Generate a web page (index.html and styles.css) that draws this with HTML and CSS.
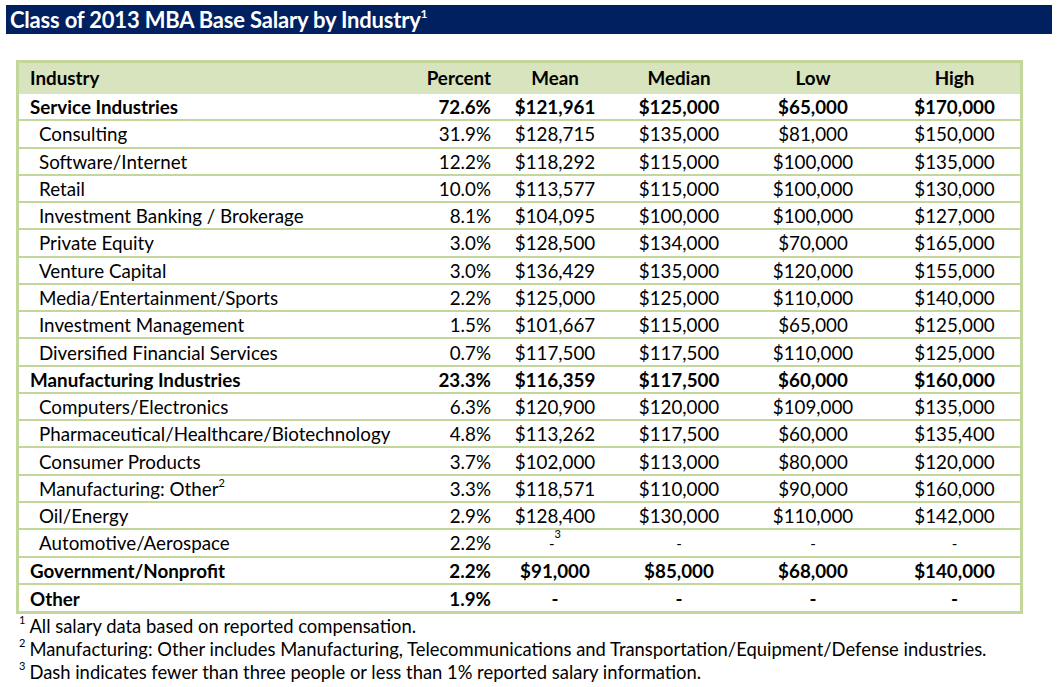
FILE: index.html
```html
<!DOCTYPE html>
<html>
<head>
<meta charset="utf-8">
<link rel="stylesheet" href="styles.css">
</head>
<body>
<div class="title">Class of 2013 MBA Base Salary by Industry<sup>1</sup></div>
<table class="salary">
  <colgroup>
    <col class="c-ind"><col class="c-pct"><col class="c-mean"><col class="c-med"><col class="c-low"><col class="c-high">
  </colgroup>
  <thead>
    <tr><th class="ind">Industry</th><th class="pct">Percent</th><th>Mean</th><th>Median</th><th>Low</th><th class="high">High</th></tr>
  </thead>
  <tbody>
    <tr class="grp"><td class="ind">Service Industries</td><td class="pct">72.6%</td><td>$121,961</td><td>$125,000</td><td>$65,000</td><td class="high">$170,000</td></tr>
    <tr><td class="ind sub">Consulting</td><td class="pct">31.9%</td><td>$128,715</td><td>$135,000</td><td>$81,000</td><td class="high">$150,000</td></tr>
    <tr><td class="ind sub">Software/Internet</td><td class="pct">12.2%</td><td>$118,292</td><td>$115,000</td><td>$100,000</td><td class="high">$135,000</td></tr>
    <tr><td class="ind sub">Retail</td><td class="pct">10.0%</td><td>$113,577</td><td>$115,000</td><td>$100,000</td><td class="high">$130,000</td></tr>
    <tr><td class="ind sub">Investment Banking / Brokerage</td><td class="pct">8.1%</td><td>$104,095</td><td>$100,000</td><td>$100,000</td><td class="high">$127,000</td></tr>
    <tr><td class="ind sub">Private Equity</td><td class="pct">3.0%</td><td>$128,500</td><td>$134,000</td><td>$70,000</td><td class="high">$165,000</td></tr>
    <tr><td class="ind sub">Venture Capital</td><td class="pct">3.0%</td><td>$136,429</td><td>$135,000</td><td>$120,000</td><td class="high">$155,000</td></tr>
    <tr><td class="ind sub">Media/Entertainment/Sports</td><td class="pct">2.2%</td><td>$125,000</td><td>$125,000</td><td>$110,000</td><td class="high">$140,000</td></tr>
    <tr><td class="ind sub">Investment Management</td><td class="pct">1.5%</td><td>$101,667</td><td>$115,000</td><td>$65,000</td><td class="high">$125,000</td></tr>
    <tr><td class="ind sub">Diversified Financial Services</td><td class="pct">0.7%</td><td>$117,500</td><td>$117,500</td><td>$110,000</td><td class="high">$125,000</td></tr>
    <tr class="grp"><td class="ind">Manufacturing Industries</td><td class="pct">23.3%</td><td>$116,359</td><td>$117,500</td><td>$60,000</td><td class="high">$160,000</td></tr>
    <tr><td class="ind sub">Computers/Electronics</td><td class="pct">6.3%</td><td>$120,900</td><td>$120,000</td><td>$109,000</td><td class="high">$135,000</td></tr>
    <tr><td class="ind sub">Pharmaceutical/Healthcare/Biotechnology</td><td class="pct">4.8%</td><td>$113,262</td><td>$117,500</td><td>$60,000</td><td class="high">$135,400</td></tr>
    <tr><td class="ind sub">Consumer Products</td><td class="pct">3.7%</td><td>$102,000</td><td>$113,000</td><td>$80,000</td><td class="high">$120,000</td></tr>
    <tr><td class="ind sub">Manufacturing: Other<sup>2</sup></td><td class="pct">3.3%</td><td>$118,571</td><td>$110,000</td><td>$90,000</td><td class="high">$160,000</td></tr>
    <tr><td class="ind sub">Oil/Energy</td><td class="pct">2.9%</td><td>$128,400</td><td>$130,000</td><td>$110,000</td><td class="high">$142,000</td></tr>
    <tr><td class="ind sub">Automotive/Aerospace</td><td class="pct">2.2%</td><td class="dash">-<sup>3</sup></td><td class="dash">-</td><td class="dash">-</td><td class="high dash">-</td></tr>
    <tr class="grp"><td class="ind">Government/Nonprofit</td><td class="pct">2.2%</td><td>$91,000</td><td>$85,000</td><td>$68,000</td><td class="high">$140,000</td></tr>
    <tr class="grp last"><td class="ind">Other</td><td class="pct">1.9%</td><td>-</td><td>-</td><td>-</td><td class="high">-</td></tr>
  </tbody>
</table>
<div class="notes">
  <p><sup>1</sup>All salary data based on reported compensation.</p>
  <p><sup>2</sup>Manufacturing: Other includes Manufacturing, Telecommunications and Transportation/Equipment/Defense industries.</p>
  <p><sup>3</sup>Dash indicates fewer than three people or less than 1% reported salary information.</p>
</div>
</body>
</html>
```

FILE: styles.css
```css
html, body {
  margin: 0;
  padding: 0;
  background: #ffffff;
}
body {
  font-family: Lato, "Open Sans", sans-serif;
  color: #000000;
  padding-top: 5px;
}
.title {
  margin: 0 6px 0 6px;
  height: 29px;
  line-height: 30px;
  background: #002060;
  color: #ffffff;
  font-weight: bold;
  font-size: 22px;
  padding-left: 4px;
  letter-spacing: -0.2px;
}
.title sup {
  font-size: 12px;
  vertical-align: 10px;
  line-height: 0;
}
.salary {
  margin: 26px 0 0 16px;
  width: 1007px;
  border: 3px solid #c3d69b;
  border-spacing: 0;
  border-collapse: separate;
  table-layout: fixed;
  font-size: 18.8px;
}
.c-ind { width: 396px; }
.c-pct { width: 82px; }
.c-mean { width: 116px; }
.c-med { width: 132px; }
.c-low { width: 136px; }
.c-high { width: 139px; }
.salary th {
  background: #d7e4bd;
  height: 31px;
  padding: 0 0 3px 0;
  box-sizing: border-box;
  font-weight: bold;
  text-align: center;
  vertical-align: middle;
}
.salary td {
  height: 25.28px;
  padding: 0;
  border-bottom: 2px solid #c3d69b;
  text-align: center;
  vertical-align: middle;
  white-space: nowrap;
}
.salary tr.last td {
  border-bottom: none;
  height: 26.5px;
}
.salary .ind {
  text-align: left;
  padding-left: 11px;
}
.salary .ind.sub {
  padding-left: 20px;
}
.salary .pct {
  text-align: right;
  padding-right: 6px;
}
.salary .high {
  padding-left: 8px;
}
.grp td {
  font-weight: bold;
}
.salary sup {
  font-size: 11px;
  line-height: 0;
  vertical-align: 9px;
}
.salary td.dash {
  font-size: 15px;
}
.salary td.dash sup {
  vertical-align: 11px;
  font-size: 11px;
}
.notes {
  margin: 1px 0 0 19px;
  font-size: 18.4px;
}
.notes p {
  margin: 0;
  height: 23px;
  line-height: 23px;
}
.notes sup {
  font-size: 11px;
  line-height: 0;
  vertical-align: 9px;
  margin-right: 4px;
}
```
